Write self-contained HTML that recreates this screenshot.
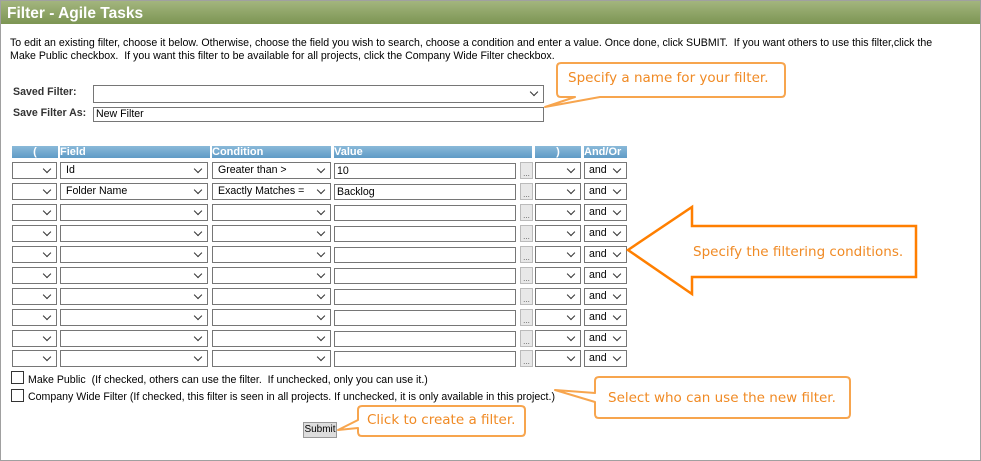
<!DOCTYPE html>
<html><head><style>
body{margin:0;width:981px;height:461px;position:relative;background:#fff;font-family:"Liberation Sans",Arial,sans-serif;font-size:10.6px;color:#000;overflow:hidden}
.a{position:absolute}
.frame{left:0;top:0;width:979px;height:459px;border:1px solid #a0a0a0}
.title{left:1px;top:1px;width:979px;height:23px;background:linear-gradient(#a3b57e,#7c9553);color:#fff;font-weight:bold;font-size:15.5px;line-height:25px;padding-left:6px;box-sizing:border-box}
.sel{position:absolute;height:16px;border:1px solid #767676;background:#fff;box-sizing:border-box;font-size:10.6px;line-height:15px;padding-left:5px}
.sel:after{content:"";position:absolute;right:6px;top:3px;width:5px;height:5px;border-right:1px solid #333;border-bottom:1px solid #333;transform:rotate(45deg)}
.inp{position:absolute;height:16px;border:1px solid #767676;background:#fff;box-sizing:border-box;line-height:14px;padding-left:2px}
.btn{position:absolute;width:13px;height:17px;background:#e8e8e8;border:1px solid #bbb;box-sizing:border-box;font-size:8px;text-align:center;line-height:22px;color:#555}
.hd{position:absolute;top:146px;height:12px;background:linear-gradient(#8ab9d9,#5f9bc6);color:#fff;font-weight:bold;font-size:11px;line-height:12px}
.cb{position:absolute;width:11px;height:11px;border:1px solid #333;background:#fff}
.co{color:#f08a24;font-family:"DejaVu Sans","Liberation Sans",sans-serif;font-size:13.5px}
</style></head><body>
<div class="a frame"></div>
<div class="a title">Filter - Agile Tasks</div>
<div class="a" style="left:10px;top:37px;width:950px;line-height:13px">To edit an existing filter, choose it below. Otherwise, choose the field you wish to search, choose a condition and enter a value. Once done, click SUBMIT.&nbsp; If you want others to use this filter,click the Make Public checkbox.&nbsp; If you want this filter to be available for all projects, click the Company Wide Filter checkbox.</div>
<div class="a" style="left:13px;top:86px;font-weight:bold;color:#333">Saved Filter:</div>
<div class="a" style="left:13px;top:107px;font-weight:bold;color:#333">Save Filter As:</div>
<div class="sel" style="left:93px;top:85px;width:451px;height:18px"></div>
<div class="inp" style="left:93px;top:107px;width:451px;height:15px;line-height:13px">New Filter</div>

<div class="hd" style="left:12px;width:46px;text-align:center">(</div>
<div class="hd" style="left:60px;width:150px">Field</div>
<div class="hd" style="left:212px;width:119px">Condition</div>
<div class="hd" style="left:334px;width:198px">Value</div>
<div class="hd" style="left:535px;width:46px;text-align:center">)</div>
<div class="hd" style="left:584px;width:43px">And/Or</div>

<div id="rows"></div>
<script>
var tops=[162,183,204,225,246,267,288,309,330,350],h='';
var f=['Id','Folder Name'],c=['Greater than &gt;','Exactly Matches ='],v=['10','Backlog'];
tops.forEach(function(t,i){
h+='<div class="sel" style="left:12px;top:'+t+'px;width:45px;height:17px"></div>';
h+='<div class="sel" style="left:60px;top:'+t+'px;width:148px;height:17px">'+(f[i]||'')+'</div>';
h+='<div class="sel" style="left:212px;top:'+t+'px;width:119px;height:17px">'+(c[i]||'')+'</div>';
h+='<div class="inp" style="left:334px;top:'+(t+1)+'px;width:182px">'+(v[i]||'')+'</div>';
h+='<div class="btn" style="left:520px;top:'+t+'px">...</div>';
h+='<div class="sel" style="left:535px;top:'+t+'px;width:46px;height:17px"></div>';
h+='<div class="sel" style="left:584px;top:'+t+'px;width:43px;height:17px;padding-left:4px">and</div>';
});
document.getElementById('rows').innerHTML=h;
</script>
<div class="cb" style="left:11px;top:371px"></div>
<div class="a" style="left:28px;top:374px">Make Public&nbsp; (If checked, others can use the filter.&nbsp; If unchecked, only you can use it.)</div>
<div class="cb" style="left:11px;top:389px"></div>
<div class="a" style="left:28px;top:391px">Company Wide Filter (If checked, this filter is seen in all projects. If unchecked, it is only available in this project.)</div>
<div class="a" style="left:303px;top:422px;width:34px;height:16px;background:#ddd;border:1px solid #999;box-sizing:border-box;font-size:10px;line-height:14px;text-align:center">Submit</div>

<svg class="a" style="left:0;top:0" width="981" height="461">
<g fill="#fff" stroke="#f7a54e" stroke-width="2" stroke-linejoin="round">
<path d="M561 63 H781 Q785 63 785 67 V93 Q785 97 781 97 H600 L545 107 L575 97 H561 Q557 97 557 93 V67 Q557 63 561 63Z"/>
<path d="M599 377 H846 Q850 377 850 381 V414 Q850 418 846 418 H599 Q595 418 595 414 V402 L555 390 L595 393 V381 Q595 377 599 377Z"/>
<path d="M362 406 H521 Q525 406 525 410 V432 Q525 436 521 436 H362 Q358 436 358 432 V428 L338 430 L358 420 V410 Q358 406 362 406Z"/>
</g>
<path d="M628 250 L692 207 V226 H916 V277 H692 V294 Z" fill="#fff" stroke="#ff7f00" stroke-width="2.5" stroke-linejoin="miter"/>
</svg>
<div class="a co" style="left:568px;top:70px">Specify a name for your filter.</div>
<div class="a co" style="left:693px;top:244px">Specify the filtering conditions.</div>
<div class="a co" style="left:608px;top:390px">Select who can use the new filter.</div>
<div class="a co" style="left:367px;top:412px">Click to create a filter.</div>
</body></html>
